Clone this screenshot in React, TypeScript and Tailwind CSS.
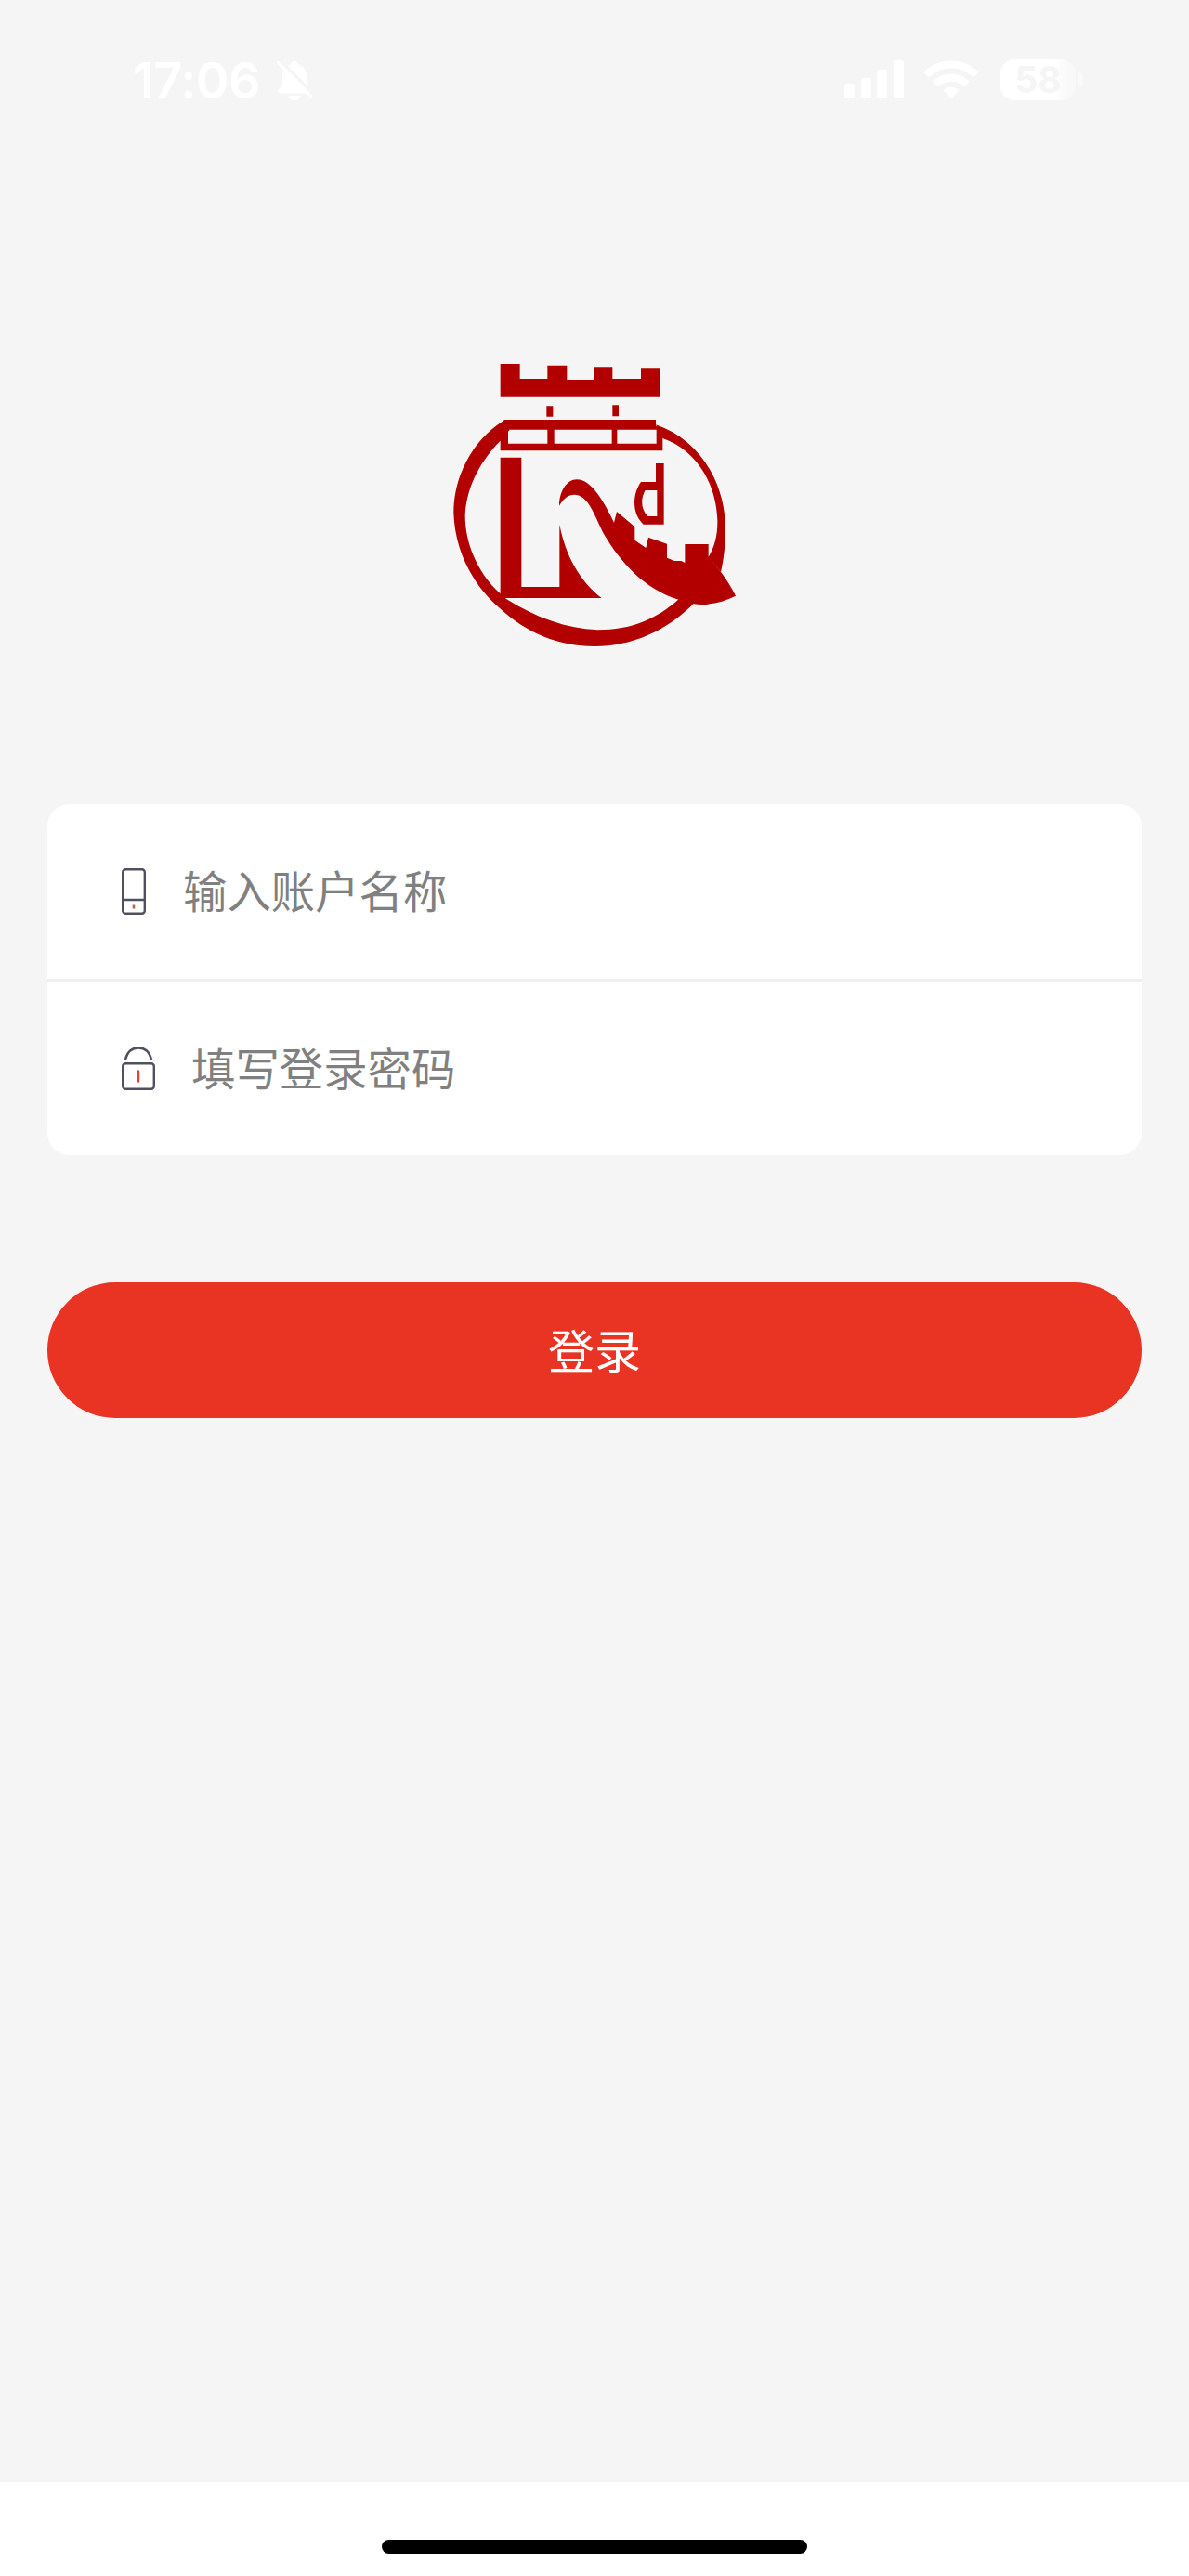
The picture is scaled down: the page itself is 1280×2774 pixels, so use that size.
import type { ReactNode } from "react";

function BellOffIcon() {
  return (
    <svg width="42" height="46" viewBox="0 0 42 46" className="ml-4">
      <path
        d="M21 2c2.600 0 4 1.600 4 3.600 6 1.800 9 6.600 9 12.400v7c0 4 4.500 6.500 4.500 9.500 0 1.500-1 2-2.500 2H6c-1.500 0-2.500-.5-2.500-2C3.500 31.500 8 29 8 25v-7c0-5.800 3-10.600 9-12.400C17 3.600 18.400 2 21 2zM14.500 39h13c-.6 3-3.200 5-6.500 5s-5.900-2-6.500-5z"
        fill="#fff"
      />
      <path d="M6 1l36 37" stroke="#f5f5f5" strokeWidth="3.500" />
      <path d="M3 3l36 37" stroke="#fff" strokeWidth="3" strokeLinecap="round" />
    </svg>
  );
}

function SignalIcon() {
  return (
    <svg width="65" height="42" viewBox="0 0 65 42" fill="#fff">
      <rect x="0" y="25" width="11" height="16" rx="3" />
      <rect x="18" y="19" width="11" height="22" rx="3" />
      <rect x="35" y="10" width="11" height="31" rx="3" />
      <rect x="53" y="0" width="11" height="41" rx="3" />
    </svg>
  );
}

function WifiIcon() {
  return (
    <svg width="60" height="42" viewBox="0 0 60 42" className="ml-5">
      <g fill="none" stroke="#fff" strokeWidth="8">
        <path d="M3 15.500a38.500 38.500 0 0 1 54 0" />
        <path d="M13 25.500a24.500 24.500 0 0 1 34 0" />
      </g>
      <path d="M30 41l-8.500-9a12.500 12.500 0 0 1 17 0z" fill="#fff" />
    </svg>
  );
}

function StatusBar() {
  return (
    <div className="flex h-[174px] items-start justify-between pt-[63px] pr-[114px] pl-[143px]">
      <div className="flex h-[48px] items-center">
        <span className="font-[Inter,sans-serif] text-[54px] leading-[48px] font-semibold tracking-[-0.5px] text-white">
          17:06
        </span>
        <BellOffIcon />
      </div>
      <div className="flex h-[46px] items-center">
        <SignalIcon />
        <WifiIcon />
        <div className="ml-[23px] flex h-[44px] w-[81px] items-center justify-center rounded-[15px] bg-linear-to-r from-white from-70% to-[#f9f9f9] to-90% font-[Inter,sans-serif] text-[39px] font-bold text-[#f5f5f5]">
          58
        </div>
        <div className="ml-[3px] h-4 w-[5px] rounded-r-full bg-[#fafafa]" />
      </div>
    </div>
  );
}

function Logo() {
  return (
    <svg width="340" height="340" viewBox="0 0 1020 1020" fill="#b20000">
      {/* battlement */}
      <path d="M206 66H269V114H358V71H421V117H510V76H568V114H660V79H720V170H206Z" />
      <path d="M355 202H376V236H355ZM568 199H588V235H568Z" />
      {/* ring, left and bottom */}
      <path d="M222 246C120 305 55 425 55 545C58 665 115 780 205 856C290 935 395 978 510 978C630 978 745 928 832 838L782 826C710 890 630 925 520 925C420 920 320 885 224 824L206 808C140 750 92 655 92 555C96 460 145 375 206 314L235 280Z" />
      {/* ring, right */}
      <path d="M708 262C850 310 933 450 933 600C933 650 927 700 918 738L878 690C898 655 908 620 907 570C902 440 830 340 730 306Z" />
      {/* lintel */}
      <path
        fillRule="evenodd"
        d="M218 246H708V266L730 276V346H206V290ZM231 278V323H358V278ZM380 278V323H566V278ZM583 278V323H710V278Z"
      />
      {/* pillar and foot */}
      <path d="M206 368H274V786H397V584C415 680 460 765 533 822H206Z" />
      {/* wall running down to the tail */}
      <path d="M396 524C396 478 420 439 453 439C500 439 540 510 573 578L582 543L640 592V635L676 660L684 626L744 647V692L768 702H790L802 708V648H878V688L918 738C935 760 953 788 966 815C920 838 870 848 828 840L782 827C670 795 590 700 540 615C510 555 490 488 445 488C425 488 408 502 396 524Z" />
      {/* small d */}
      <path
        fillRule="evenodd"
        d="M708 387H734V584H668C632 552 630 490 660 447H708ZM712 474H674C658 502 660 535 682 558H712Z"
      />
    </svg>
  );
}

function PhoneIcon() {
  return (
    <svg width="26" height="50" viewBox="0 0 26 50" fill="none" stroke="#50505f">
      <rect x="1.200" y="1.200" width="23.600" height="47.600" rx="3" strokeWidth="2.400" />
      <path d="M1 34h24" strokeWidth="2.400" />
      <path d="M13 39.500v4" stroke="#c0614f" strokeWidth="2.600" />
    </svg>
  );
}

function LockIcon() {
  return (
    <svg width="36" height="47" viewBox="0 0 36 47" fill="none" stroke="#50505f">
      <path d="M4 14C6 6 11 1.500 18 1.500S30 6 32 14" strokeWidth="2.400" />
      <rect x="1.200" y="18.200" width="33.600" height="27.600" rx="3" strokeWidth="2.400" />
      <path d="M18 26.500v11" stroke="#ee3d38" strokeWidth="2.400" strokeLinecap="round" />
    </svg>
  );
}

function Field({
  icon,
  type,
  placeholder,
  className,
}: {
  icon: ReactNode;
  type: string;
  placeholder: string;
  className: string;
}) {
  return (
    <label className={`flex items-center pl-20 ${className}`}>
      {icon}
      <input
        type={type}
        placeholder={placeholder}
        className="mb-[5px] h-[72px] flex-1 bg-transparent text-[47.400px] text-gray-800 outline-none placeholder:text-[#808080]"
      />
    </label>
  );
}

export default function App() {
  return (
    <div className="flex h-[2774px] w-[1280px] flex-col bg-[#f5f5f5] font-['Noto_Sans_CJK_SC',sans-serif]">
      <StatusBar />
      <main className="flex flex-1 flex-col px-[51px]">
        <div className="flex justify-center pt-[196px]">
          <Logo />
        </div>
        <form className="mt-[156px]">
          <div className="h-[378px] overflow-hidden rounded-[24px] bg-white">
            <Field
              icon={<PhoneIcon />}
              type="text"
              placeholder="输入账户名称"
              className="h-[191px] gap-[40px] border-b-3 border-[#f0f0f0]"
            />
            <Field
              icon={<LockIcon />}
              type="password"
              placeholder="填写登录密码"
              className="h-[187px] gap-[39px]"
            />
          </div>
          <button
            type="button"
            className="mt-[137px] flex h-[146px] w-full items-center justify-center rounded-full bg-[#e93323] pb-[3px] text-[50px] text-white"
          >
            登录
          </button>
        </form>
      </main>
      <footer className="flex h-[101px] justify-center bg-white pt-[62px]">
        <div className="h-[15px] w-[458px] rounded-full bg-black" />
      </footer>
    </div>
  );
}
